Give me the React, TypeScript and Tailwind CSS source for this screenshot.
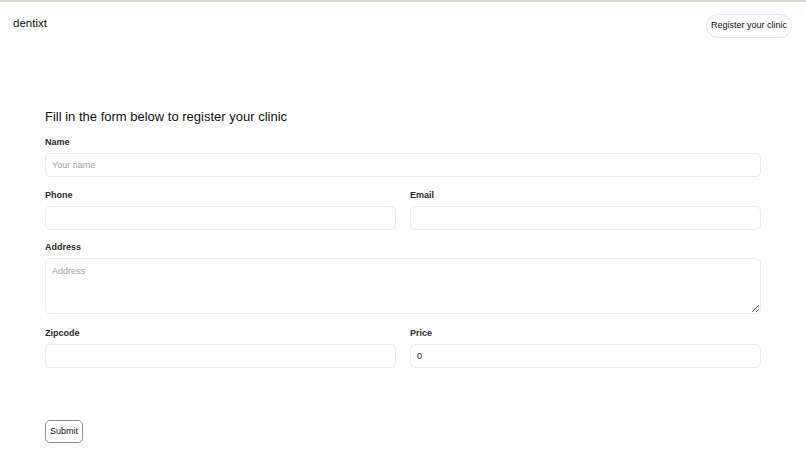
import React from 'react';

const font = { fontFamily: '"Liberation Sans", Arial, Helvetica, sans-serif' };

function Label({ children }: { children: React.ReactNode }) {
  return <label className="block text-[9px] font-bold text-[#2a2a2a] leading-none mb-[6px]">{children}</label>;
}

const inputCls =
  'block w-full h-[24px] rounded-[5px] border border-[#ececec] bg-white px-[6px] text-[9px] text-[#111] placeholder:text-[#9ca3af] outline-none';

export default function App() {
  return (
    <div className="min-h-[461px] bg-white text-black border-t-[2px] border-[#d5dccd]" style={font}>
      {/* Header */}
      <header className="flex items-start justify-between pl-[13px] pr-[14px] pt-[12px]">
        <div className="text-[11.5px] leading-[18px] text-[#111]">dentixt</div>
        <button className="h-[24px] px-[4px] rounded-full border border-[#e5e5e5] text-[9px] text-[#111]">
          Register your clinic
        </button>
      </header>

      {/* Form */}
      <div className="px-[45px] pt-[70px]">
        <h1 className="text-[13px] leading-[18px] text-[#111] mb-[12px]">
          Fill in the form below to register your clinic
        </h1>

        <div className="mb-[14px]">
          <Label>Name</Label>
          <input className={inputCls} placeholder="Your name" />
        </div>

        <div className="grid grid-cols-2 gap-x-[14px] mb-[13px]">
          <div>
            <Label>Phone</Label>
            <input className={inputCls} />
          </div>
          <div>
            <Label>Email</Label>
            <input className={inputCls} />
          </div>
        </div>

        <div className="mb-[15px]">
          <Label>Address</Label>
          <textarea
            className="block w-full h-[56px] rounded-[5px] border border-[#ececec] bg-white px-[6px] py-[6px] text-[9px] placeholder:text-[#9ca3af] outline-none"
            placeholder="Address"
          />
        </div>

        <div className="grid grid-cols-2 gap-x-[14px]">
          <div>
            <Label>Zipcode</Label>
            <input className={inputCls} />
          </div>
          <div>
            <Label>Price</Label>
            <input className={inputCls} defaultValue="0" />
          </div>
        </div>

        <button className="mt-[52px] h-[23px] px-[4px] rounded-[5px] border border-[#8f8f8f] text-[9px] text-[#111]">
          Submit
        </button>
      </div>
    </div>
  );
}
